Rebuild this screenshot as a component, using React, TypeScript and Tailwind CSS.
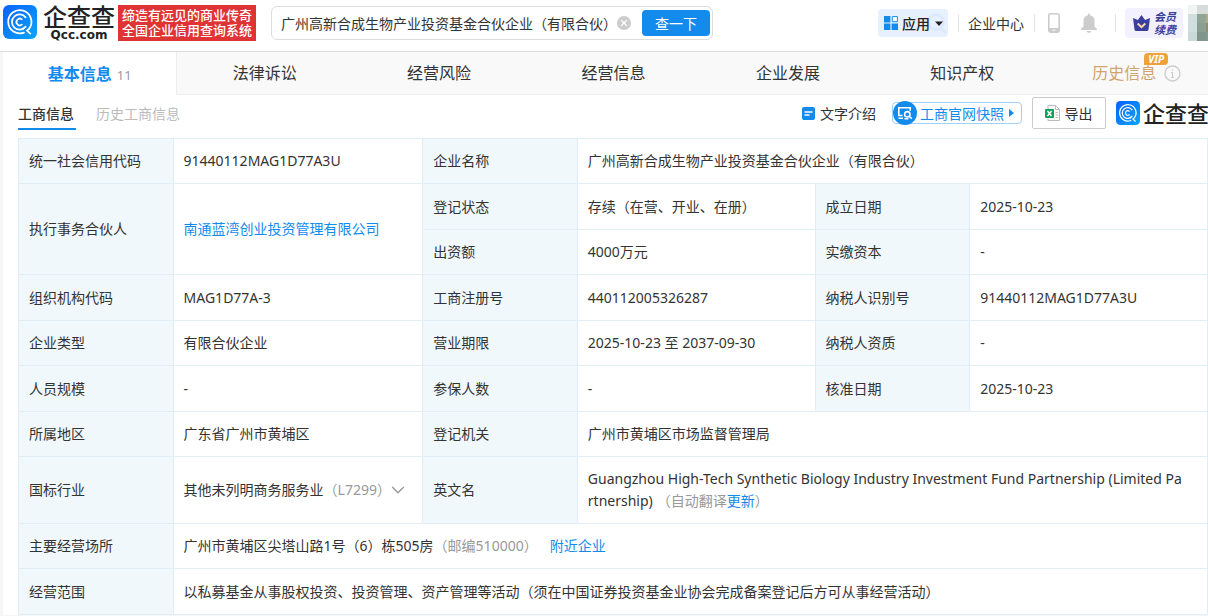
import { ReactNode } from 'react';
import { ChevronDown, X } from 'lucide-react';

type Cell = {
  label: string;
  value: ReactNode;
  span?: number;
  rows?: number;
};

const tabs = ['法律诉讼', '经营风险', '经营信息', '企业发展', '知识产权'];

const linkClass = 'text-[#128bed] hover:underline';

const infoRows: Cell[][] = [
  [
    { label: '统一社会信用代码', value: '91440112MAG1D77A3U' },
    { label: '企业名称', value: '广州高新合成生物产业投资基金合伙企业（有限合伙）', span: 3 }
  ],
  [
    {
      label: '执行事务合伙人',
      value: <a href="#partner" className={linkClass}>南通蓝湾创业投资管理有限公司</a>,
      rows: 2
    },
    { label: '登记状态', value: '存续（在营、开业、在册）' },
    { label: '成立日期', value: '2025-10-23' }
  ],
  [
    { label: '出资额', value: '4000万元' },
    { label: '实缴资本', value: '-' }
  ],
  [
    { label: '组织机构代码', value: 'MAG1D77A-3' },
    { label: '工商注册号', value: '440112005326287' },
    { label: '纳税人识别号', value: '91440112MAG1D77A3U' }
  ],
  [
    { label: '企业类型', value: '有限合伙企业' },
    { label: '营业期限', value: '2025-10-23 至 2037-09-30' },
    { label: '纳税人资质', value: '-' }
  ],
  [
    { label: '人员规模', value: '-' },
    { label: '参保人数', value: '-' },
    { label: '核准日期', value: '2025-10-23' }
  ],
  [
    { label: '所属地区', value: '广东省广州市黄埔区' },
    { label: '登记机关', value: '广州市黄埔区市场监督管理局', span: 3 }
  ],
  [
    {
      label: '国标行业',
      value: (
        <button className="flex items-center whitespace-nowrap">
          其他未列明商务服务业
          <span className="text-[#999]">（L7299）</span>
          <ChevronDown className="shrink-0 w-[22px] h-[22px] -ml-1 text-[#999]" strokeWidth={1.5} />
        </button>
      )
    },
    {
      label: '英文名',
      value: (
        <>
          Guangzhou High-Tech Synthetic Biology Industry Investment Fund Partnership (Limited Pa
          <wbr />
          rtnership)
          <span className="ml-1 text-[#999]">
            （自动翻译<a href="#update" className={linkClass}>更新</a>）
          </span>
        </>
      ),
      span: 3
    }
  ],
  [
    {
      label: '主要经营场所',
      value: (
        <>
          广州市黄埔区尖塔山路1号（6）栋505房
          <span className="text-[#999]">（邮编510000）</span>
          <a href="#nearby" className={`ml-3 ${linkClass}`}>附近企业</a>
        </>
      ),
      span: 5
    }
  ],
  [
    {
      label: '经营范围',
      value: '以私募基金从事股权投资、投资管理、资产管理等活动（须在中国证券投资基金业协会完成备案登记后方可从事经营活动）',
      span: 5
    }
  ]
];

const mosaic = [
  'bg-[#f0f5f4]', 'bg-[#d5dcda]', 'bg-[#d8dcda]',
  'bg-[#d0dfdd]', 'bg-[#8fa595]', 'bg-[#b5a98c]',
  'bg-[#d0dfdf]', 'bg-[#8a9f91]', 'bg-[#8f8f70]',
  'bg-[#c9d9d8]', 'bg-[#80958c]', 'bg-[#849a92]'
];

function LogoMark({ className }: { className: string }) {
  return (
    <svg viewBox="0 0 34 34" className={className} aria-hidden="true">
      <defs>
        <linearGradient id="mark" x1="0" y1="0" x2="1" y2="1">
          <stop offset="0" stopColor="#0a62fb" />
          <stop offset="1" stopColor="#0aa5fb" />
        </linearGradient>
      </defs>
      <rect width="34" height="34" rx="6" fill="url(#mark)" />
      <g fill="none" stroke="#fff" strokeLinecap="round">
        <path d="M21 27.600A11.600 11.600 0 1 1 26.200 23.600L24 25.600L27.300 28.600" strokeWidth="1.800" />
        <path d="M22.600 21.600A7.600 7.600 0 1 1 22.600 12.400" strokeWidth="1.800" />
        <path d="M18.800 19.600A3.300 3.300 0 1 1 18.800 14.400" strokeWidth="1.800" />
      </g>
    </svg>
  );
}

function Header() {
  return (
    <header className="flex items-start h-[52px] pl-[3px] border-b border-[#ddd] bg-white">
      <a href="#home" className="flex shrink-0 mt-[5px]">
        <LogoMark className="w-[34px] h-[34px]" />
        <span className="flex flex-col ml-1.5 text-[#222]">
          <span className="text-[24px] leading-6 font-medium">企查查</span>
          <span className="text-[12px] leading-3 font-bold font-['DejaVu_Sans',sans-serif] text-center">Qcc.com</span>
        </span>
      </a>
      <p className="shrink-0 mt-[5px] ml-[3px] px-1 py-[3px] bg-[#e03434] text-white text-[13px] leading-[15px] font-medium">
        缔造有远见的商业传奇
        <br />
        全国企业信用查询系统
      </p>

      <form className="flex items-center shrink-0 mt-1.5 ml-[15px] w-[442px] h-[34px] pl-[9px] pr-[2px] border border-[#ddd] rounded-md">
        <input
          aria-label="搜索企业"
          defaultValue="广州高新合成生物产业投资基金合伙企业（有限合伙）"
          className="flex-1 min-w-0 text-[14px] text-[#333] outline-none"
        />
        <button type="button" aria-label="清除" className="flex items-center justify-center w-3.5 h-3.5 rounded-full bg-[#ccc] text-white">
          <X className="w-2.5 h-2.5" strokeWidth={3} />
        </button>
        <button type="button" className="ml-[11px] w-[68px] h-[26px] rounded bg-[#128bed] text-white text-[14px]">
          查一下
        </button>
      </form>

      <nav className="flex items-center shrink-0 ml-auto mt-[5px] h-9 text-[14px] text-[#333]">
        <button className="relative flex items-center h-7 w-[70px] pl-1.5 rounded bg-[#e7f0fe] font-medium text-[#222]">
          <svg viewBox="0 0 22 24" className="absolute right-0 bottom-0.5 w-[22px] h-6" fill="none" stroke="#dbe9fe" strokeWidth="2.500" aria-hidden="true">
            <circle cx="10" cy="11" r="7.500" />
            <path d="M15 17l4.500 5" />
          </svg>
          <svg viewBox="0 0 14 14" className="w-3.5 h-3.5 mr-1" aria-hidden="true">
            <path fill="#128bed" d="M0 0h6.400v6.400H0zM0 7.600h6.400V14H0zM7.600 7.600H14V14H7.600z" />
            <path fill="#fff" stroke="#128bed" d="M8.300.6h5.100v5.100H8.300z" />
          </svg>
          <span className="relative">应用</span>
          <svg viewBox="0 0 8 5" className="relative w-2 h-[5px] ml-[5px]" aria-hidden="true">
            <path fill="#222" d="M0 .5h8L4 5z" />
          </svg>
        </button>
        <span className="w-px h-[18px] ml-2.5 mr-[9px] bg-[#e5e5e5]" />
        <a href="#center">企业中心</a>
        <span className="w-px h-[18px] ml-2.5 mr-[13px] bg-[#e5e5e5]" />
        <button aria-label="手机版">
          <svg viewBox="0 0 12 20" className="w-3 h-5" aria-hidden="true">
            <rect x=".8" y=".8" width="10.400" height="18.400" rx="1.600" fill="#fff" stroke="#ccc" strokeWidth="1.600" />
            <path fill="#ccc" d="M1 15h10v4H1z" />
            <path stroke="#fff" d="M4.500 17.200h3" />
          </svg>
        </button>
        <button aria-label="消息" className="ml-[21px]">
          <svg viewBox="0 0 16 20" className="w-4 h-5" aria-hidden="true">
            <path fill="#ccc" d="M7 1.500a1 1 0 0 1 2 0v.7c2.800.5 4.500 2.600 4.500 5.300v6L16 16v1H0v-1l2.500-2.500v-6c0-2.700 1.700-4.800 4.500-5.300zM5.500 18h5c-.4 1.200-1.300 1.800-2.500 1.800S5.900 19.200 5.500 18z" />
          </svg>
        </button>
        <span className="w-px h-[18px] ml-[18px] mr-[9px] bg-[#e5e5e5]" />
        <a href="#vip" className="flex items-center w-[58px] h-[30px] pl-2 rounded-sm bg-[#f3f1ff] text-[#3a3f9e]">
          <svg viewBox="0 0 17 16" className="w-[17px] h-4 mr-1" aria-hidden="true">
            <path fill="#3a3f9e" d="M8.500 0l3.600 5L17 3l-1.500 11.500Q15.300 16 13.800 16H3.200Q1.700 16 1.500 14.500L0 3l4.900 2z" />
            <path fill="none" stroke="#ffd9a8" strokeWidth="2" d="M4.700 8.500l3.800 3.700 3.800-3.700" />
          </svg>
          <span className="text-[11px] leading-[13px] font-bold italic">
            会员
            <br />
            续费
          </span>
        </a>
        <span className="grid grid-cols-[9px_9px_2px] grid-rows-4 ml-[5px] h-9" role="img" aria-label="头像">
          {mosaic.map((color, index) => (
            <span key={index} className={color} />
          ))}
        </span>
      </nav>
    </header>
  );
}

function Tabs() {
  return (
    <div className="overflow-hidden bg-[#f9f9f9]">
      <nav className="grid grid-cols-7 -mr-4 h-[43px] text-[16px] text-[#333]">
        <a href="#base" className="flex items-center justify-center bg-white border-r border-[#eee] font-bold text-[#128bed]">
          <span>
            基本信息
            <span className="ml-[5px] text-[13px] font-normal text-[#999]">11</span>
          </span>
        </a>
        {tabs.map((tab) => (
          <a key={tab} href="#tab" className="flex items-center justify-center border-b border-[#eee]">
            {tab}
          </a>
        ))}
        <a href="#history" className="flex items-center justify-center border-b border-[#eee] text-[#d0a46c]">
          <span className="relative">
            历史信息
            <span className="absolute -top-2 -right-3 h-3 w-6 rounded-sm rounded-bl-none bg-[#f0a13c] text-center text-[10px] leading-3 font-bold italic text-white">
              VIP
            </span>
          </span>
          <svg viewBox="0 0 17 17" className="w-[17px] h-[17px] ml-2" fill="none" stroke="#ccc" aria-hidden="true">
            <circle cx="8.500" cy="8.500" r="7.500" strokeWidth="1.300" />
            <path d="M8.500 7.500v5M8.500 4.500v1.500M7 7.500h1.500M7 12.500h3" strokeWidth="1.200" />
          </svg>
        </a>
      </nav>
    </div>
  );
}

function Toolbar() {
  return (
    <div className="flex h-[43px] overflow-hidden text-[14px] text-[#333]">
      <div className="flex items-start gap-5">
        <a href="#info" className="h-[35px] w-[58px] pt-2 border-b-2 border-[#128bed] font-medium leading-[22px]">工商信息</a>
        <a href="#info-history" className="pt-2 leading-[22px] text-[#bbb]">历史工商信息</a>
      </div>
      <div className="flex items-center shrink-0 ml-auto -mr-px h-9">
        <button className="flex items-center">
          <svg viewBox="0 0 13 13" className="w-[13px] h-[13px] mr-[5px]" aria-hidden="true">
            <rect width="13" height="13" rx="2" fill="#128bed" />
            <path stroke="#fff" strokeWidth="1.300" d="M2.500 5h8M2.500 8h5" />
          </svg>
          文字介绍
        </button>
        <button className="flex items-center h-[22px] ml-4 pr-[7px] border border-[#a0d0f8] rounded text-[#128bed]">
          <svg viewBox="0 0 24 24" className="w-6 h-6 mr-[3px]" aria-hidden="true">
            <circle cx="12" cy="12" r="12" fill="#128bed" />
            <g fill="none" stroke="#fff" strokeWidth="1.600">
              <path d="M9.500 14.500H5.800V6.800h11.400v3M5.500 17.200H10" />
              <circle cx="14.300" cy="13.300" r="2.700" />
              <path d="M16.200 15.200l2.600 2.600M11.500 17.700h4" />
            </g>
          </svg>
          工商官网快照
          <svg viewBox="0 0 5 8" className="w-[5px] h-2 ml-[5px]" aria-hidden="true">
            <path fill="#128bed" d="M0 0l5 4-5 4z" />
          </svg>
        </button>
        <button className="flex items-center justify-center w-[74px] h-8 ml-2.5 border border-[#ccc] rounded-xs">
          <svg viewBox="0 0 15 16" className="w-[15px] h-4 mr-1" aria-hidden="true">
            <path fill="#fff" stroke="#bbb" d="M3 .5h7.500L14.500 4.500v11H3z" />
            <path fill="none" stroke="#bbb" d="M10.500.5v4h4M10.500 7.500h2.500M10.500 10h2.500M10.500 12.500h2.500" />
            <rect y="4" width="9" height="9" rx="1" fill="#12a05c" />
            <path stroke="#fff" strokeWidth="1.400" d="M2.500 6l4 5M6.500 6l-4 5" />
          </svg>
          导出
        </button>
        <span className="flex items-center ml-2.5 text-[22px] leading-6 font-medium text-[#222]">
          <LogoMark className="w-6 h-6 mr-[3px]" />
          企查查
        </span>
      </div>
    </div>
  );
}

function InfoTable() {
  return (
    <table className="w-full table-fixed border-collapse text-[14px] leading-[22px] text-[#333]">
      <colgroup>
        <col className="w-[13%]" />
        <col className="w-[21%]" />
        <col className="w-[13%]" />
        <col className="w-[20%]" />
        <col className="w-[13%]" />
        <col className="w-[20%]" />
      </colgroup>
      <tbody>
        {infoRows.map((cells, index) => (
          <tr key={index} className="odd:h-[45px] even:h-[46px]">
            {cells.map((cell) => [
              <th
                key={cell.label}
                scope="row"
                rowSpan={cell.rows}
                className="px-2.5 border border-[#e1eef6] bg-[#f0f8fc] text-left font-normal"
              >
                {cell.label}
              </th>,
              <td
                key={`${cell.label}-value`}
                rowSpan={cell.rows}
                colSpan={cell.span}
                className={`px-2.5 border border-[#e1eef6] ${cell.label === '英文名' ? 'py-[11px]' : ''}`}
              >
                {cell.value}
              </td>
            ])}
          </tr>
        ))}
      </tbody>
    </table>
  );
}

export default function App() {
  return (
    <div className="min-h-screen overflow-x-hidden bg-[#f6f6f6] font-['Noto_Sans','Noto_Sans_CJK_SC',sans-serif]">
      <Header />
      <main className="ml-[3px] bg-white">
        <Tabs />
        <div className="pl-[15px]">
          <Toolbar />
          <InfoTable />
        </div>
      </main>
    </div>
  );
}
